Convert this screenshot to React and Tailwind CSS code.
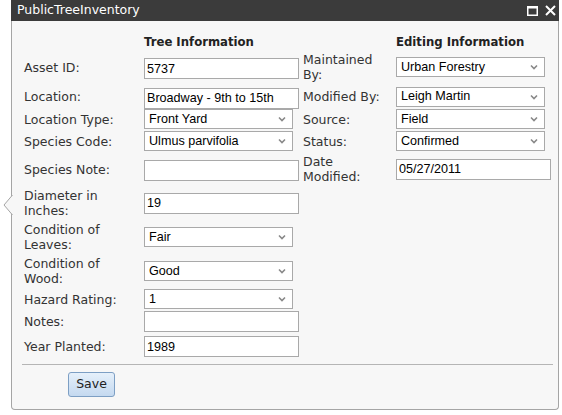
import React from "react";

const lbl = "font-['DejaVu_Sans',Verdana,sans-serif] text-[12.5px] leading-[15px] text-[#333]";

function TextBox({ value, w = "w-[155px]" }) {
  return (
    <input
      readOnly
      value={value}
      className={`${w} h-[21px] border border-[#a9a9a9] bg-white px-[2px] font-['Liberation_Sans',Arial,sans-serif] text-[12.6px] text-black outline-none`}
    />
  );
}

function Dropdown({ value }) {
  return (
    <div className="flex w-[149px] h-[20px] items-center justify-between border border-[#a9a9a9] bg-white pl-[4px] pr-[6px] font-['Liberation_Sans',Arial,sans-serif] text-[12.6px] text-black">
      <span>{value}</span>
      <svg width="8" height="6" viewBox="0 0 8 6">
        <path d="M1 1.5 L4 4.5 L7 1.5" fill="none" stroke="#888" strokeWidth="1.6" />
      </svg>
    </div>
  );
}

function Row({ h, mt, children }) {
  return (
    <div className={`flex items-center ${h} ${mt}`}>{children}</div>
  );
}

export default function App() {
  return (
    <div className="relative w-[562px] h-[415px] bg-white overflow-hidden">
      <div className="ml-[11px] w-[548px]">
        {/* title bar */}
        <div className="flex h-[21px] items-center justify-between bg-[#3b3b3b] pl-[6px] pr-[3px]">
          <span className="font-['DejaVu_Sans',Verdana,sans-serif] text-[12.5px] text-white">
            PublicTreeInventory
          </span>
          <div className="flex items-center gap-[7px]">
            <svg width="11" height="10" viewBox="0 0 11 10">
              <rect x="0.75" y="0.75" width="9.5" height="8.5" fill="none" stroke="#fff" strokeWidth="1.5" />
              <rect x="0" y="0" width="11" height="2.5" fill="#fff" />
            </svg>
            <svg width="11" height="11" viewBox="0 0 11 11">
              <path d="M1 1 L10 10 M10 1 L1 10" stroke="#fff" strokeWidth="2" />
            </svg>
          </div>
        </div>

        {/* body */}
        <div className="relative h-[389px] rounded-b-[4px] border-x border-b border-[#a5a5a5] bg-[#f7f7f7] pl-[12px] pt-[12px]">
          <div className="flex h-[19px] items-center font-['DejaVu_Sans',Verdana,sans-serif] text-[11.7px] font-bold text-[#222]">
            <div className="w-[120px]" />
            <div className="w-[252px]">Tree Information</div>
            <div>Editing Information</div>
          </div>

          <Row h="h-[30px]" mt="">
            <div className={`w-[120px] ${lbl}`}>Asset ID:</div>
            <div className="w-[159px]"><TextBox value="5737" /></div>
            <div className={`w-[93px] ${lbl}`}>Maintained<br />By:</div>
            <Dropdown value="Urban Forestry" />
          </Row>
          <Row h="h-[21px]" mt="mt-[4px]">
            <div className={`w-[120px] ${lbl}`}>Location:</div>
            <div className="w-[159px]"><TextBox value="Broadway - 9th to 15th" /></div>
            <div className={`w-[93px] ${lbl}`}>Modified By:</div>
            <Dropdown value="Leigh Martin" />
          </Row>
          <Row h="h-[20px]" mt="mt-[2px]">
            <div className={`w-[120px] ${lbl}`}>Location Type:</div>
            <div className="w-[159px]"><Dropdown value="Front Yard" /></div>
            <div className={`w-[93px] ${lbl}`}>Source:</div>
            <Dropdown value="Field" />
          </Row>
          <Row h="h-[20px]" mt="mt-[2px]">
            <div className={`w-[120px] ${lbl}`}>Species Code:</div>
            <div className="w-[159px]"><Dropdown value="Ulmus parvifolia" /></div>
            <div className={`w-[93px] ${lbl}`}>Status:</div>
            <Dropdown value="Confirmed" />
          </Row>
          <Row h="h-[30px]" mt="mt-[3px]">
            <div className={`w-[120px] ${lbl}`}>Species Note:</div>
            <div className="w-[159px]"><TextBox value="" /></div>
            <div className={`w-[93px] ${lbl}`}>Date<br />Modified:</div>
            <TextBox value="05/27/2011" />
          </Row>
          <Row h="h-[30px]" mt="mt-[4px]">
            <div className={`w-[120px] ${lbl}`}>Diameter in<br />Inches:</div>
            <TextBox value="19" />
          </Row>
          <Row h="h-[30px]" mt="mt-[4px]">
            <div className={`w-[120px] ${lbl}`}>Condition of<br />Leaves:</div>
            <Dropdown value="Fair" />
          </Row>
          <Row h="h-[30px]" mt="mt-[4px]">
            <div className={`w-[120px] ${lbl}`}>Condition of<br />Wood:</div>
            <Dropdown value="Good" />
          </Row>
          <Row h="h-[20px]" mt="mt-[3px]">
            <div className={`w-[120px] ${lbl}`}>Hazard Rating:</div>
            <Dropdown value="1" />
          </Row>
          <Row h="h-[21px]" mt="mt-[2px]">
            <div className={`w-[120px] ${lbl}`}>Notes:</div>
            <TextBox value="" />
          </Row>
          <Row h="h-[21px]" mt="mt-[4px]">
            <div className={`w-[120px] ${lbl}`}>Year Planted:</div>
            <TextBox value="1989" />
          </Row>

          <div className="ml-[-2px] mr-[5px] mt-[7px] border-t border-[#b5b5b5]" />

          <button className="ml-[44px] mt-[7px] h-[25px] w-[47px] rounded-[3px] border border-[#7d9fc4] bg-gradient-to-b from-[#e6f0fa] to-[#c4d9f0] font-['DejaVu_Sans',Verdana,sans-serif] text-[12.5px] text-[#222]">
            Save
          </button>

          {/* pointer */}
          <svg className="absolute left-[-9px] top-[174px]" width="10" height="20" viewBox="0 0 10 20">
            <path d="M9.5 0 L1 10 L9.5 20" fill="#f7f7f7" stroke="#a5a5a5" strokeWidth="1" />
          </svg>
        </div>
      </div>
    </div>
  );
}
